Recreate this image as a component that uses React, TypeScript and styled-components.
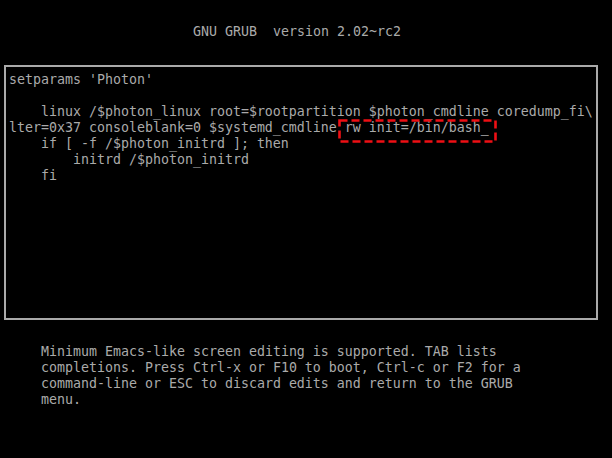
import React from "react";
import styled, { createGlobalStyle } from "styled-components";

const Global = createGlobalStyle`
  html, body { margin: 0; padding: 0; background: #000; }
  #root { width: 612px; height: 458px; }
`;

const Screen = styled.div`
  width: 612px;
  height: 458px;
  background: #000;
  color: #aaaaaa;
  font-family: "DejaVu Sans Mono", "Liberation Mono", monospace;
  font-size: 13.29px;
  line-height: 16px;
  display: flex;
  flex-direction: column;
  overflow: hidden;
`;

const Title = styled.div`
  padding: 24px 0 0 193px;
  white-space: pre;
  height: 16px;
`;

const EditBox = styled.div`
  margin: 25px 14px 0 4px;
  height: 246px;
  border: 2px solid #aaaaaa;
  padding: 5px 3px 0;
  box-sizing: content-box;
  display: flex;
  flex-direction: column;
`;

const Line = styled.div`
  white-space: pre;
  height: 16px;
`;

const Marked = styled.span`
  position: relative;
`;

const Cursor = styled.span`
  color: #d8d8d8;
`;

const DashFrame = styled.svg`
  position: absolute;
  left: -7px;
  top: -1px;
  width: 160px;
  height: 25px;
  overflow: visible;
  pointer-events: none;
`;

const Help = styled.div`
  margin-top: 24px;
  padding-left: 41px;
  display: flex;
  flex-direction: column;
`;

const lines = [
  "setparams 'Photon'",
  "",
  "    linux /$photon_linux root=$rootpartition $photon_cmdline coredump_fi\\",
];

const after = [
  "    if [ -f /$photon_initrd ]; then",
  "        initrd /$photon_initrd",
  "    fi",
];

const help = [
  "Minimum Emacs-like screen editing is supported. TAB lists",
  "completions. Press Ctrl-x or F10 to boot, Ctrl-c or F2 for a",
  "command-line or ESC to discard edits and return to the GRUB",
  "menu.",
];

export default function App() {
  return (
    <>
      <Global />
      <Screen>
        <Title>GNU GRUB  version 2.02~rc2</Title>
        <EditBox>
          {lines.map((l, i) => (
            <Line key={i}>{l}</Line>
          ))}
          <Line>
            {"lter=0x37 consoleblank=0 $systemd_cmdline "}
            <Marked>
              rw init=/bin/bash<Cursor>_</Cursor>
              <DashFrame viewBox="0 0 160 25">
                <rect
                  x="1.5"
                  y="1.5"
                  width="156"
                  height="21"
                  fill="none"
                  stroke="#ee0f14"
                  strokeWidth="2.6"
                  strokeDasharray="8 4"
                />
              </DashFrame>
            </Marked>
          </Line>
          {after.map((l, i) => (
            <Line key={i}>{l}</Line>
          ))}
        </EditBox>
        <Help>
          {help.map((l, i) => (
            <Line key={i}>{l}</Line>
          ))}
        </Help>
      </Screen>
    </>
  );
}
